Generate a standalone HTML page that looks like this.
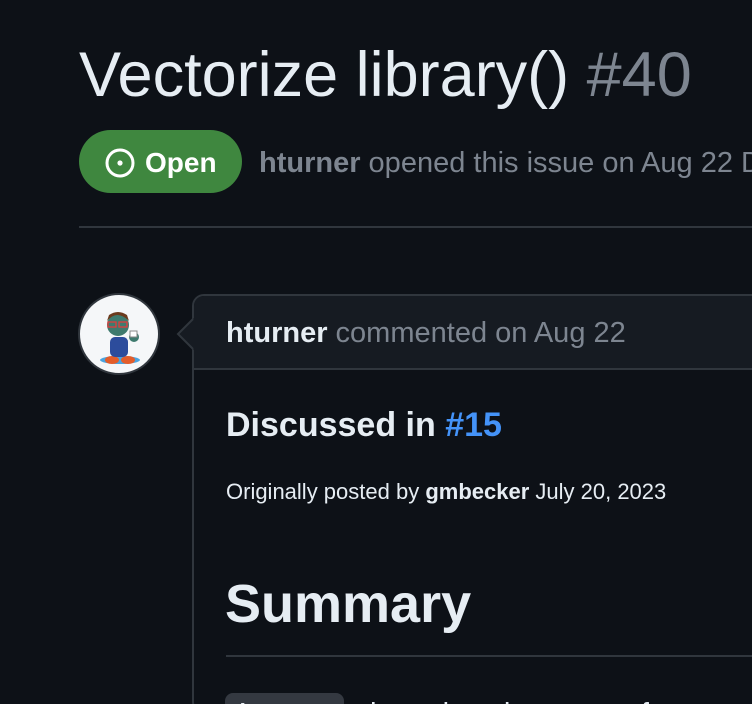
<!DOCTYPE html>
<html style="overflow:hidden;height:704px"><head><style>
body{margin:0;width:752px;height:704px;background:#0d1117;overflow:hidden;font-family:"Liberation Sans",sans-serif;color:#e6edf3;position:relative}
.a{position:absolute;white-space:nowrap}
</style></head><body>
<div class="a" style="left:79px;top:38px;font-size:63px;line-height:74px">Vectorize library() <span style="color:#7d8590">#40</span></div>
<div class="a" style="left:79px;top:130px;width:163px;height:63px;border-radius:32px;background:#3f873f"></div>
<svg class="a" style="left:104px;top:147px" width="32" height="32" viewBox="0 0 32 32"><circle cx="16" cy="16" r="13" fill="none" stroke="#fff" stroke-width="3"/><circle cx="16" cy="16" r="2.6" fill="#fff"/></svg>
<div class="a" style="left:145px;top:146px;font-size:28px;font-weight:bold;color:#fff;line-height:34px">Open</div>
<div class="a" style="left:259px;top:146px;font-size:29px;color:#7d8590;line-height:34px"><b>hturner</b> opened this issue on Aug 22 D</div>
<div class="a" style="left:79px;top:226px;width:673px;height:2px;background:#30363d"></div>
<div class="a" style="left:78px;top:293px;width:78px;height:78px;border-radius:50%;background:#f5f7f9;border:2px solid #30363d"></div>
<svg class="a" style="left:90px;top:305px" width="60" height="62" viewBox="0 0 60 62"><ellipse cx="30" cy="55" rx="20" ry="4" fill="#4aa3df"/><ellipse cx="22" cy="55" rx="7" ry="4" fill="#e35d2b"/><ellipse cx="38" cy="55" rx="7" ry="4" fill="#e35d2b"/><rect x="20" y="32" width="18" height="20" rx="5" fill="#2c4c9c"/><circle cx="28" cy="20" r="11" fill="#3e7a6e"/><path d="M17 16q10-12 22 0l-2-6q-9-6-18 0z" fill="#6b3a1d"/><rect x="18" y="17" width="8" height="5" fill="none" stroke="#e03c3c" stroke-width="1.3"/><rect x="29" y="17" width="8" height="5" fill="none" stroke="#e03c3c" stroke-width="1.3"/><circle cx="44" cy="32" r="5" fill="#3e7a6e"/><rect x="40" y="26" width="7" height="6" fill="#fff" stroke="#888"/></svg>
<div class="a" style="left:192px;top:294px;width:600px;height:420px;border:2px solid #30363d;border-radius:12px;box-sizing:border-box"></div>
<div class="a" style="left:194px;top:296px;width:558px;height:72px;background:#161b22;border-top-left-radius:10px"></div>
<div class="a" style="left:192px;top:368px;width:560px;height:2px;background:#30363d"></div>
<svg class="a" style="left:176px;top:318px" width="18" height="32" viewBox="0 0 18 32"><path d="M18 0L2 16L18 32Z" fill="#161b22"/><path d="M17 1L2 16L17 31" fill="none" stroke="#30363d" stroke-width="2"/></svg>
<div class="a" style="left:226px;top:316px;font-size:29px;color:#7d8590;line-height:34px"><b style="color:#e6edf3">hturner</b> commented on Aug 22</div>
<div class="a" style="left:226px;top:405px;font-size:34px;font-weight:bold;line-height:40px">Discussed in <span style="color:#4493f8">#15</span></div>
<div class="a" style="left:226px;top:479px;font-size:22px;line-height:26px">Originally posted by <b>gmbecker</b> July 20, 2023</div>
<div class="a" style="left:225px;top:573px;font-size:54px;font-weight:bold;line-height:62px">Summary</div>
<div class="a" style="left:226px;top:655px;width:526px;height:2px;background:#30363d"></div>
<div class="a" style="left:225px;top:693px;width:119px;height:30px;border-radius:8px;background:#343941"></div>
<div class="a" style="left:234px;top:697px;font-size:26px;line-height:30px">Attr</div>
<div class="a" style="left:362px;top:697px;font-size:29px;line-height:34px">   that takes the name of</div>
</body></html>
